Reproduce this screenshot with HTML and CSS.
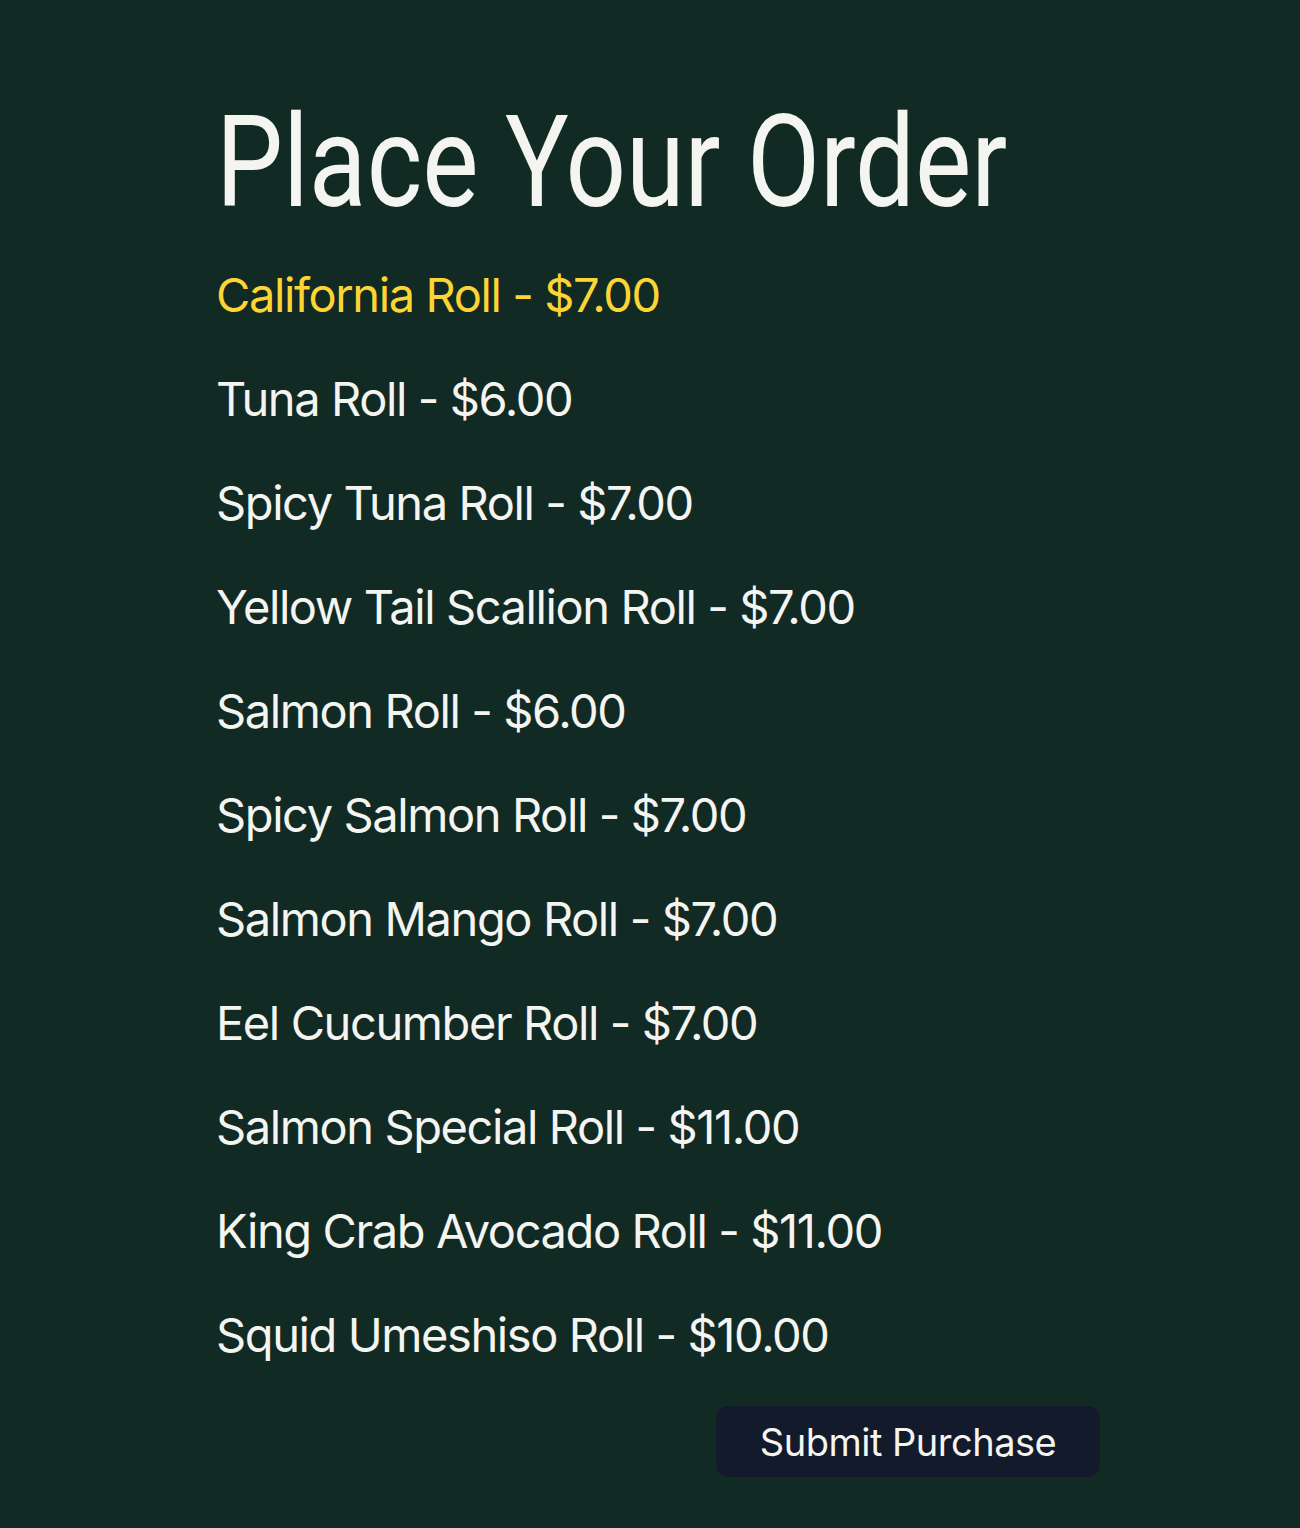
FILE: index.html
```html
<!DOCTYPE html>
<html lang="en">
<head>
<meta charset="utf-8">
<title>Place Your Order</title>
<link rel="stylesheet" href="styles.css">
</head>
<body>
<main class="order">
  <h1 class="order-title"><span class="order-title-text">Place Your Order</span></h1>
  <ul class="menu">
    <li class="menu-item menu-item--active">California Roll - $7.00</li>
    <li class="menu-item">Tuna Roll - $6.00</li>
    <li class="menu-item">Spicy Tuna Roll - $7.00</li>
    <li class="menu-item">Yellow Tail Scallion Roll - $7.00</li>
    <li class="menu-item">Salmon Roll - $6.00</li>
    <li class="menu-item">Spicy Salmon Roll - $7.00</li>
    <li class="menu-item">Salmon Mango Roll - $7.00</li>
    <li class="menu-item">Eel Cucumber Roll - $7.00</li>
    <li class="menu-item">Salmon Special Roll - $11.00</li>
    <li class="menu-item">King Crab Avocado Roll - $11.00</li>
    <li class="menu-item">Squid Umeshiso Roll - $10.00</li>
  </ul>
  <div class="actions">
    <button class="submit" type="button">Submit Purchase</button>
  </div>
</main>
</body>
</html>
```
FILE: styles.css
```css
html, body {
  margin: 0;
  padding: 0;
}
body {
  background: #122a24;
  color: #f4f4f0;
  font-family: Inter, "Noto Sans", sans-serif;
  min-height: 1528px;
}
.order {
  width: 900px;
  margin: 0 auto;
  padding-top: 98px;
}
.order-title {
  margin: 0 0 17px;
  padding-left: 16px;
  font-family: Roboto, sans-serif;
  font-weight: 400;
  font-size: 128px;
  line-height: 128px;
  color: #f4f4f0;
  white-space: nowrap;
}
.order-title-text {
  display: inline-block;
  transform: scaleX(0.83);
  transform-origin: left center;
}
.menu {
  list-style: none;
  margin: 0;
  padding: 0 0 0 16px;
}
.menu-item {
  font-size: 47px;
  line-height: 104px;
  letter-spacing: -1.4px;
  color: #f4f4f0;
}
.menu-item--active {
  color: #fcd535;
}
.actions {
  display: flex;
  justify-content: flex-end;
  margin-top: 19px;
}
.submit {
  width: 384px;
  height: 71px;
  border: none;
  border-radius: 12px;
  background: #131a2b;
  color: #f4f4f0;
  font-family: Inter, "Noto Sans", sans-serif;
  font-size: 38px;
  letter-spacing: -0.5px;
}
```
